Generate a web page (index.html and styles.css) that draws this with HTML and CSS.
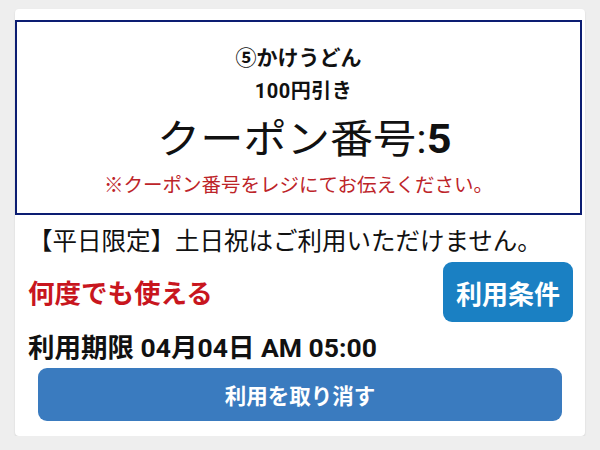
FILE: index.html
```html
<!DOCTYPE html>
<html lang="ja">
<head>
<meta charset="utf-8">
<link rel="stylesheet" href="styles.css">
</head>
<body>
<div class="card">
  <div class="coupon">
    <div class="title">⑤かけうどん</div>
    <div class="discount">100円引き</div>
    <div class="number"><span class="wide">クーポン番号:<b>5</b></span></div>
    <div class="note">※クーポン番号をレジにてお伝えください。</div>
  </div>
  <div class="limit">【平日限定】土日祝はご利用いただけません。</div>
  <div class="row">
    <div class="repeat">何度でも使える</div>
    <button class="terms">利用条件</button>
  </div>
  <div class="expire">利用期限 04月04日 AM 05:00</div>
  <button class="cancel">利用を取り消す</button>
</div>
</body>
</html>
```
FILE: styles.css
```css
html, body {
  margin: 0;
  padding: 0;
  background: #eeeeee;
  font-family: Roboto, "Noto Sans CJK JP", sans-serif;
  color: #111;
}
.card {
  margin: 9px 0 0 15px;
  width: 570px;
  box-sizing: border-box;
  background: #fff;
  border-radius: 4px;
  padding: 11px 0 15px 0;
  box-shadow: 0 1px 2px rgba(0,0,0,0.12);
}
.coupon {
  margin-right: 3px;
  border: 2px solid #0c1d72;
  padding: 22px 0 11px;
  text-align: center;
}
.title {
  font-size: 21px;
  font-weight: 700;
  line-height: 28px;
}
.discount {
  font-size: 20px;
  font-weight: 700;
  line-height: 38px;
  letter-spacing: 0.5px;
  padding-left: 10px;
}
.number {
  font-size: 40px;
  font-weight: 400;
  line-height: 60px;
}
.wide {
  display: inline-block;
  transform: scaleX(1.08);
  margin-left: 12px;
}
.number b {
  font-weight: 700;
}
.note {
  font-size: 19.5px;
  color: #bd2429;
  line-height: 32px;
}
.limit {
  margin: 10px 0 0 13px;
  font-size: 24.5px;
  line-height: 34px;
}
.row {
  margin: 3px 12px 0 13px;
  height: 60px;
  display: flex;
  align-items: center;
  justify-content: space-between;
}
.repeat {
  font-size: 26.5px;
  font-weight: 700;
  color: #c8161e;
  line-height: 34px;
  margin-top: 4px;
}
.terms {
  width: 130px;
  height: 60px;
  border: none;
  border-radius: 9px;
  background: #1a80c3;
  color: #fff;
  font-family: Roboto, "Noto Sans CJK JP", sans-serif;
  font-size: 26px;
  font-weight: 700;
  padding: 0;
}
.expire {
  margin: 8px 0 0 13px;
  font-size: 26.5px;
  font-weight: 700;
  line-height: 36px;
}
.cancel {
  display: block;
  margin: 2px 23px 0;
  width: 524px;
  height: 53px;
  border: none;
  border-radius: 9px;
  background: #3a7bbf;
  color: #fff;
  font-family: Roboto, "Noto Sans CJK JP", sans-serif;
  font-size: 21.5px;
  font-weight: 700;
  padding: 0;
}
```
